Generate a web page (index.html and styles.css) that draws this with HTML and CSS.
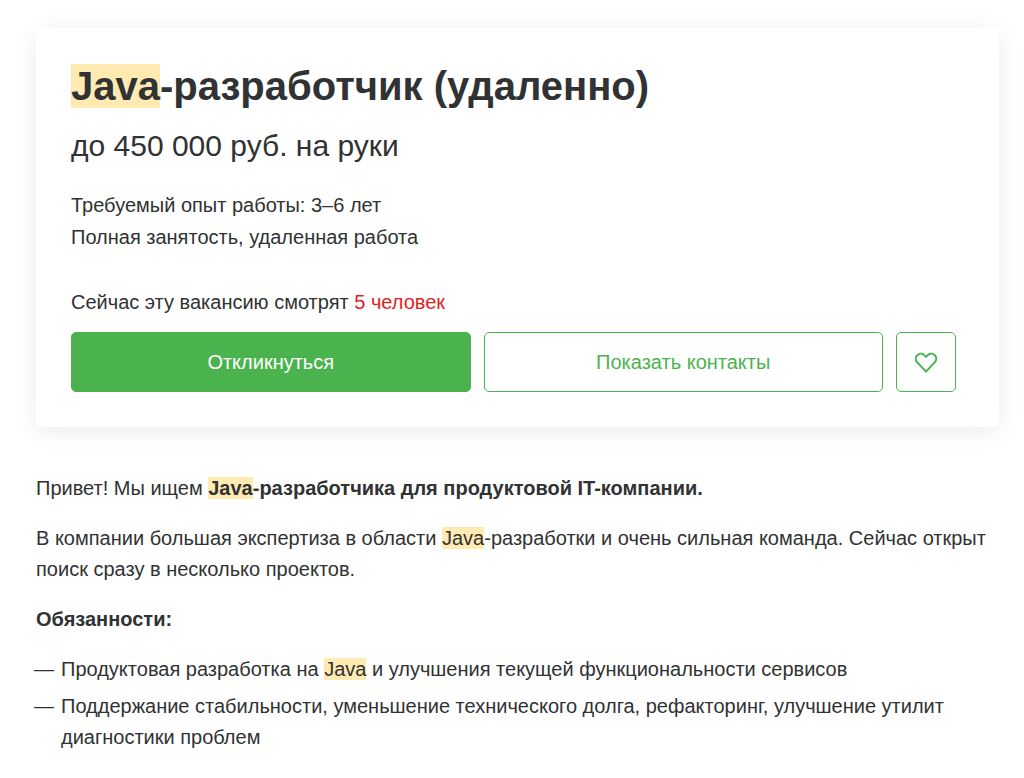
FILE: index.html
```html
<!DOCTYPE html>
<html lang="ru">
<head>
    <meta charset="UTF-8">
    <meta name="viewport" content="width=device-width, initial-scale=1.0">
    <title>Java-разработчик (удаленно)</title>
    <link rel="stylesheet" href="styles.css">
</head>
<body>
    <main class="vacancy">
        <section class="card">
            <h1><mark>Java</mark>-разработчик (удаленно)</h1>
            <p class="salary">до 450 000 руб. на руки</p>
            <p class="info">Требуемый опыт работы: 3–6 лет</p>
            <p class="info">Полная занятость, удаленная работа</p>
            <p class="viewers">Сейчас эту вакансию смотрят <span class="viewers-count">5 человек</span></p>
            <div class="actions">
                <button type="button" class="btn btn-primary">Откликнуться</button>
                <button type="button" class="btn btn-outline">Показать контакты</button>
                <button type="button" class="btn btn-like" aria-label="В избранное">
                    <svg width="26" height="24" viewBox="0 0 26 24" fill="none" stroke="currentColor" stroke-width="2">
                        <path d="M13 21.6L4.1 12.1A5 5 0 0 1 11 4.9L13 6.9L15 4.9A5 5 0 0 1 21.9 12.1Z"/>
                    </svg>
                </button>
            </div>
        </section>

        <section class="description">
            <p>Привет! Мы ищем <strong><mark>Java</mark>-разработчика для продуктовой IT-компании.</strong></p>
            <p>В компании большая экспертиза в области <mark>Java</mark>-разработки и очень сильная команда. Сейчас открыт поиск сразу в несколько проектов.</p>
            <p><strong>Обязанности:</strong></p>
            <ul>
                <li>Продуктовая разработка на <mark>Java</mark> и улучшения текущей функциональности сервисов</li>
                <li>Поддержание стабильности, уменьшение технического долга, рефакторинг, улучшение утилит диагностики проблем</li>
            </ul>
        </section>
    </main>
</body>
</html>
```

FILE: styles.css
```css
* {
    box-sizing: border-box;
}

body {
    margin: 0;
    background-color: #ffffff;
    color: #303233;
    font-family: "Liberation Sans", Arial, sans-serif;
    font-size: 20px;
    line-height: 32px;
}

h1, p, ul {
    margin: 0;
}

mark {
    background-color: #ffebb2;
    color: inherit;
}

.vacancy {
    padding: 28px 25px 0 36px;
}

.card {
    padding: 32px 43px 35px 35px;
    border-radius: 4px;
    box-shadow: 0 4px 24px rgba(0, 0, 0, 0.08);
}

h1 {
    font-size: 40px;
    line-height: 52px;
}

.salary {
    margin: 14px 0 23px;
    font-size: 30px;
    line-height: 40px;
}

.viewers {
    margin: 33px 0 14px;
}

.viewers-count {
    color: #e01f1f;
}

.actions {
    display: flex;
    gap: 13px;
}

.btn {
    flex: 1;
    height: 60px;
    padding: 0;
    border: 1px solid #4bb34e;
    border-radius: 5px;
    background-color: #ffffff;
    color: #4bb34e;
    font-family: inherit;
    font-size: 20px;
    cursor: pointer;
}

.btn-primary {
    background-color: #4bb34e;
    color: #ffffff;
}

.btn-like {
    display: flex;
    flex: 0 0 60px;
    align-items: center;
    justify-content: center;
}

.description {
    padding-top: 46px;
    line-height: 31px;
}

.description p {
    margin-bottom: 19px;
}

.description ul {
    padding-left: 25px;
    list-style: none;
}

.description li {
    margin-bottom: 6px;
}

.description li::before {
    content: "—";
    float: left;
    margin-left: -27px;
}
```
